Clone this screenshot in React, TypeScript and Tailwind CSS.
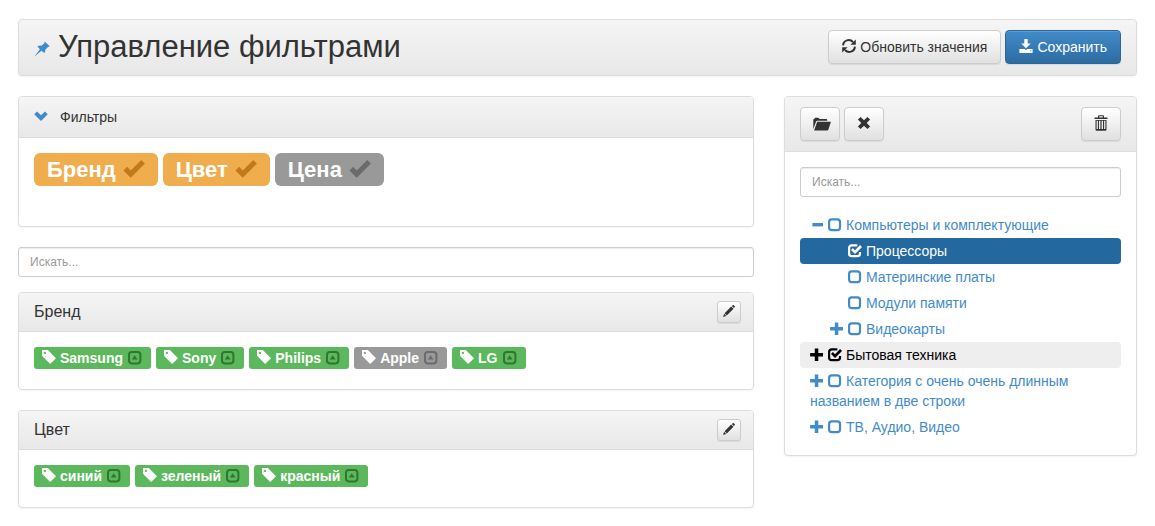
import React, { useState } from "react";
import clsx from "clsx";

type IconProps = { className?: string };

function Glyph({ className, box = "0 0 14 14", children }: IconProps & { box?: string; children: React.ReactNode }) {
  return (
    <svg viewBox={box} aria-hidden="true" fill="currentColor" className={clsx("inline-block shrink-0", className ?? "size-3.5")}>
      {children}
    </svg>
  );
}

const Pin = ({ className }: IconProps) => (
  <Glyph className={className} box="0 0 16 16">
    <path d="M10.6 .6L15.8 5.3L14 6L11.3 8.7Q11.6 10.4 10.2 12L7.4 9.7L.3 15.7L5.9 8.2L3.4 5.6Q5.2 4.2 7.4 4.8L10.4 2.3Z" />
  </Glyph>
);
const ChevronDown = ({ className }: IconProps) => (
  <Glyph className={className}>
    <path d="M.2 5.2L3 2.4L7 6.3L11 2.4L13.8 5.2L7 11.9Z" />
  </Glyph>
);
const Refresh = ({ className }: IconProps) => (
  <Glyph className={className}>
    <path d="M1.1 6.4C1.4 1.2 7.6 -.6 11 3M12.9 7.6C12.6 12.8 6.4 14.6 3 11" fill="none" stroke="currentColor" strokeWidth="2" />
    <path d="M13.8 .6V5.8H8.4ZM.2 13.4V8.2H5.6Z" />
  </Glyph>
);
const Save = ({ className }: IconProps) => (
  <Glyph className={className}>
    <path d="M5.3 0H8.7V4.4H11.7L7 9.2L2.3 4.4H5.3Z" />
    <path d="M.4 10H5.6L7 11L8.4 10H13.6V14H.4ZM11 11.4V12.2H12.4V11.4Z" fillRule="evenodd" />
  </Glyph>
);
const Folder = ({ className }: IconProps) => (
  <Glyph className={className} box="0 0 18 14">
    <path d="M.3 12V2.2L1.6 2V1.4Q1.6 .8 2.2 .8H5.2L6.6 2H13.2Q14.2 2 14.2 3V3.8H4.2Q3.4 3.8 3.1 4.6Z" />
    <path d="M4.2 4.8H17.6Q18 4.8 17.8 5.3L15.3 12.8Q15.1 13.4 14.5 13.4H1.1Z" />
  </Glyph>
);
const Cross = ({ className }: IconProps) => (
  <Glyph className={className}>
    <path d="M3.6 .9L7 4.3L10.4 .9L13.1 3.6L9.7 7L13.1 10.4L10.4 13.1L7 9.7L3.6 13.1L.9 10.4L4.3 7L.9 3.6Z" />
  </Glyph>
);
const Trash = ({ className }: IconProps) => (
  <Glyph className={className} box="0 0 14 16">
    <path
      d="M.5 2.5H4V1.2Q4 .2 5 .2H9Q10 .2 10 1.2V2.5H13.5V4H.5ZM5.2 1.3V2.5H8.8V1.3ZM1.5 5H12.5V14.5Q12.5 15.8 11.2 15.8H2.8Q1.5 15.8 1.5 14.5ZM2.6 5.8V14H3.9V5.8ZM5 5.8V14H6.4V5.8ZM7.6 5.8V14H9V5.8ZM10.1 5.8V14H11.4V5.8Z"
      fillRule="evenodd"
    />
  </Glyph>
);
const Pencil = ({ className }: IconProps) => (
  <Glyph className={className} box="0 0 12 12">
    <path d="M9.8 .3Q10.3 -.1 10.8 .3L11.8 1.3Q12.1 1.7 11.8 2.1L10.9 3.1L8.8 1.1ZM8.2 1.5L10.5 3.8L3.8 10.4L1.6 8.2ZM1.1 8.8L3.2 10.9L.1 11.9Z" />
  </Glyph>
);
const Tag = ({ className }: IconProps) => (
  <Glyph className={className} box="0 0 1200 1200">
    <path
      transform="matrix(1 0 0 -1 0 1200)"
      fillRule="evenodd"
      d="M1 700v475q0 10 7.5 17.5t17.5 7.5h474l700 -700l-500 -500zM148 953q0 -42 29 -71q30 -30 71.5 -30t71.5 30q29 29 29 71t-29 71q-30 30 -71.5 30t-71.5 -30q-29 -29 -29 -71z"
    />
  </Glyph>
);
const Tick = ({ className }: IconProps) => (
  <Glyph className={className} box="0 0 1270 1200">
    <path transform="matrix(1 0 0 -1 0 1200)" d="M29 454l419 -420l818 820l-212 212l-607 -607l-206 207z" />
  </Glyph>
);
const CollapseUp = ({ className }: IconProps) => (
  <Glyph className={className}>
    <rect x="1" y="1" width="11.4" height="11.4" rx="2.8" fill="none" stroke="currentColor" strokeWidth="2" />
    <path d="M6.7 4.2L9.6 8.4H3.8Z" />
  </Glyph>
);
const Plus = ({ className }: IconProps) => (
  <Glyph className={className}>
    <path d="M4.8 .4H8.3V5H13V8.5H8.3V13.1H4.8V8.5H.1V5H4.8Z" />
  </Glyph>
);
const Minus = ({ className }: IconProps) => (
  <Glyph className={className}>
    <path d="M2.4 5H13V8.4H2.4Z" />
  </Glyph>
);
const BoxEmpty = ({ className }: IconProps) => (
  <Glyph className={className}>
    <rect x="1.1" y="1.3" width="10.9" height="10.9" rx="2.6" fill="none" stroke="currentColor" strokeWidth="2.2" />
  </Glyph>
);
const BoxChecked = ({ className }: IconProps) => (
  <Glyph className={className}>
    <path d="M9.4 1.3H3.8Q1.1 1.3 1.1 4V9.5Q1.1 12.2 3.8 12.2H9.3Q12 12.2 12 9.5V8" fill="none" stroke="currentColor" strokeWidth="2.2" />
    <path d="M3 6L4.9 4.1L7 6.2L12.1 1.1L14 3L7 10Z" />
  </Glyph>
);

const panel = "mb-5 rounded border border-[#ddd] bg-white shadow-[0_1px_2px_rgba(0,0,0,0.05)]";
const heading = "flex items-center justify-between bg-linear-to-b from-[#f5f5f5] to-[#e8e8e8]";
const button =
  "inline-flex items-center justify-center border border-[#ccc] bg-linear-to-b from-white to-[#e0e0e0] text-[#333] shadow-[inset_0_1px_0_rgba(255,255,255,0.15),0_1px_1px_rgba(0,0,0,0.075)]";
const searchBox =
  "block h-[30px] w-full rounded-[3px] border border-[#ccc] bg-white px-[11px] text-xs text-[#555] shadow-[inset_0_1px_1px_rgba(0,0,0,0.075)] placeholder:text-[#999]";

function FilterBadge({ name, initial }: { name: string; initial: boolean }) {
  const [on, setOn] = useState(initial);
  return (
    <button
      type="button"
      aria-pressed={on}
      onClick={() => setOn(!on)}
      className={clsx(
        "flex h-[33px] items-center gap-[7px] rounded-md px-[13px] text-[22px] font-bold text-white",
        on ? "bg-[#f0ad4e]" : "bg-[#999]",
      )}
    >
      {name}
      <Tick className={clsx("mb-1 size-[22px]", on ? "text-[#c07a1c]" : "text-[#6b6b6b]")} />
    </button>
  );
}

function ValueBadge({ name, active = true }: { name: string; active?: boolean }) {
  return (
    <span
      className={clsx(
        "flex h-[22px] items-center gap-1 rounded-[3px] pr-[9px] pl-2 text-sm font-bold text-white",
        active ? "bg-[#5cb85c]" : "bg-[#999]",
      )}
    >
      <Tag className="mb-0.5 size-3.5" />
      {name}
      <button type="button" aria-label={name} className={clsx("ml-px flex", active ? "text-[#2f762f]" : "text-[#6b6b6b]")}>
        <CollapseUp />
      </button>
    </span>
  );
}

function ValuePanel({ title, children }: { title: string; children: React.ReactNode }) {
  return (
    <section className={panel}>
      <div className={clsx(heading, "rounded-t-[3px] border-b border-[#ddd] py-2 pr-3 pl-[15px]")}>
        <h2 className="text-base leading-[22px]">{title}</h2>
        <button type="button" aria-label={title} className={clsx(button, "h-[22px] w-6 rounded-[3px]")}>
          <Pencil className="mb-0.5 size-3" />
        </button>
      </div>
      <div className="flex flex-wrap gap-[5px] px-[15px] pt-[15px] pb-5">{children}</div>
    </section>
  );
}

type NodeProps = {
  name: string;
  toggle?: "open" | "closed";
  nested?: boolean;
  initial?: boolean;
  tone?: string;
};

function TreeNode({ name, toggle, nested, initial = false, tone = "text-[#428bca]" }: NodeProps) {
  const [checked, setChecked] = useState(initial);
  const Box = checked ? BoxChecked : BoxEmpty;
  const Sign = toggle === "open" ? Minus : Plus;
  return (
    <li className={clsx("relative rounded py-[3px] pr-2.5 text-sm leading-5", nested ? "pl-[30px]" : "pl-2.5", tone)}>
      {toggle ? (
        <button type="button" aria-label={name} aria-expanded={toggle === "open"} className="mr-1 leading-5">
          <Sign className="size-3.5 align-[-2px]" />
        </button>
      ) : (
        <span className="mr-1 inline-block w-3.5" />
      )}
      <label>
        <input type="checkbox" className="sr-only" checked={checked} onChange={() => setChecked(!checked)} />
        <Box className="mr-1 size-3.5 align-[-2px]" />
        {name}
      </label>
    </li>
  );
}

export default function App() {
  return (
    <main className="px-[18px] pt-[19px] font-['Liberation_Sans',Arial,sans-serif] text-sm leading-5 text-[#333]">
      <header className={clsx(panel, heading, "px-[15px] pt-2.5 pb-[11px]")}>
        <h1 className="flex items-center gap-2 text-[31px] leading-[34px]">
          <Pin className="mt-1 size-4 text-[#428bca]" />
          Управление фильтрами
        </h1>
        <div className="flex gap-1">
          <button type="button" className={clsx(button, "h-[34px] gap-1 rounded px-[13px]")}>
            <Refresh className="mb-0.5 size-3.5" />
            Обновить значения
          </button>
          <button
            type="button"
            className="inline-flex h-[34px] items-center gap-1 rounded border border-[#2b669a] bg-linear-to-b from-[#428bca] to-[#2d6ca2] px-[13px] text-white shadow-[inset_0_1px_0_rgba(255,255,255,0.15),0_1px_1px_rgba(0,0,0,0.075)]"
          >
            <Save className="mb-0.5 size-3.5" />
            Сохранить
          </button>
        </div>
      </header>

      <div className="-mx-[15px] flex items-start">
        <div className="w-2/3 px-[15px]">
          <section className={panel}>
            <h2 className={clsx(heading, "rounded-t-[3px] border-b border-[#ddd] px-[15px] py-2.5")}>
              <button type="button" className="flex items-center gap-3">
                <ChevronDown className="mb-0.5 size-3.5 text-[#428bca]" />
                Фильтры
              </button>
            </h2>
            <div className="flex flex-wrap gap-[5px] px-[15px] pt-[15px] pb-10">
              <FilterBadge name="Бренд" initial />
              <FilterBadge name="Цвет" initial />
              <FilterBadge name="Цена" initial={false} />
            </div>
          </section>

          <input type="search" aria-label="Искать" placeholder="Искать..." className={clsx(searchBox, "mb-[15px]")} />

          <ValuePanel title="Бренд">
            <ValueBadge name="Samsung" />
            <ValueBadge name="Sony" />
            <ValueBadge name="Philips" />
            <ValueBadge name="Apple" active={false} />
            <ValueBadge name="LG" />
          </ValuePanel>
          <ValuePanel title="Цвет">
            <ValueBadge name="синий" />
            <ValueBadge name="зеленый" />
            <ValueBadge name="красный" />
          </ValuePanel>
        </div>

        <aside className="w-1/3 px-[15px]">
          <section className={panel}>
            <div className={clsx(heading, "rounded-t-[3px] border-b border-[#ddd] px-[15px] py-2.5")}>
              <div className="flex gap-1">
                <button type="button" aria-label="Развернуть" className={clsx(button, "h-[34px] w-10 rounded")}>
                  <Folder className="ml-1 h-3.5 w-[18px]" />
                </button>
                <button type="button" aria-label="Снять выбор" className={clsx(button, "h-[34px] w-10 rounded")}>
                  <Cross className="mb-0.5 size-3.5" />
                </button>
              </div>
              <button type="button" aria-label="Удалить" className={clsx(button, "h-[34px] w-10 rounded")}>
                <Trash className="mb-0.5 h-4 w-3.5" />
              </button>
            </div>
            <div className="p-[15px]">
              <input type="search" aria-label="Искать" placeholder="Искать..." className={clsx(searchBox, "mb-[15px]")} />
              <ul>
                <TreeNode name="Компьютеры и комплектующие" toggle="open" />
                <TreeNode name="Процессоры" nested initial tone="bg-[#23689f] text-white" />
                <TreeNode name="Материнские платы" nested />
                <TreeNode name="Модули памяти" nested />
                <TreeNode name="Видеокарты" nested toggle="closed" />
                <TreeNode name="Бытовая техника" toggle="closed" initial tone="bg-[#eee] text-black" />
                <TreeNode name="Категория с очень очень длинным названием в две строки" toggle="closed" />
                <TreeNode name="ТВ, Аудио, Видео" toggle="closed" />
              </ul>
            </div>
          </section>
        </aside>
      </div>
    </main>
  );
}
